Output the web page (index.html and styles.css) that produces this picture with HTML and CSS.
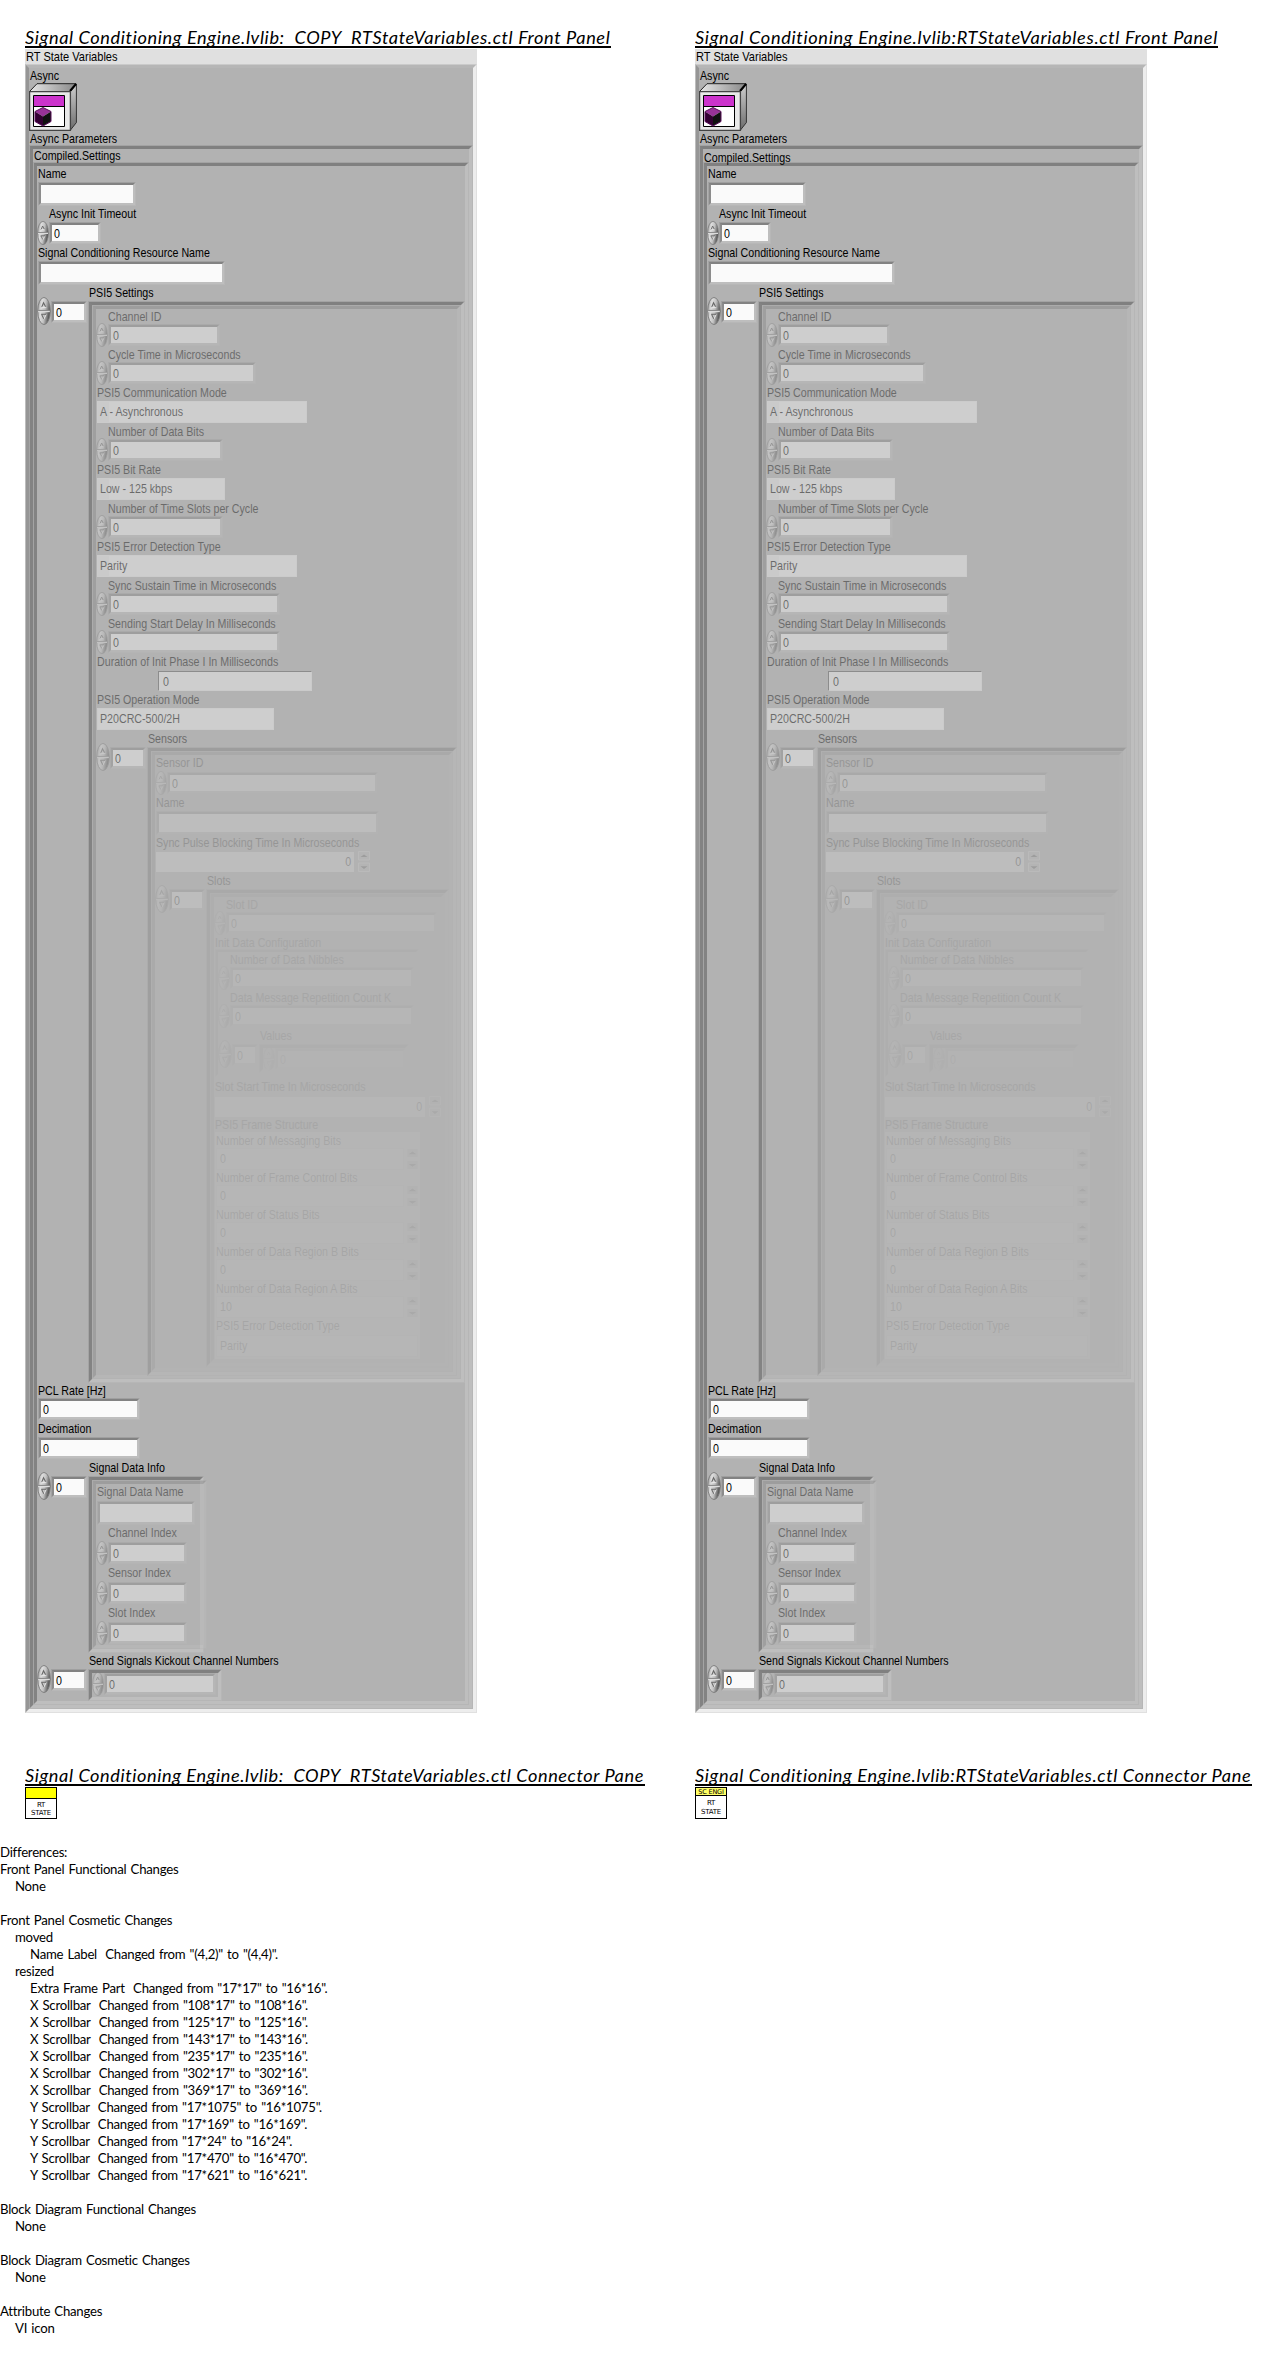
FILE: index.html
```html
<!DOCTYPE html>
<html lang="en">
<head>
<meta charset="utf-8">
<title>VI Comparison Report</title>
<link rel="stylesheet" href="styles.css">
</head>
<body>
<svg class="defs" width="0" height="0">
  <defs>
    <linearGradient id="knob" x1="0" y1="0" x2="1" y2="0.3"><stop offset="0" stop-color="#8a8a8a"/><stop offset=".35" stop-color="#dedede"/><stop offset=".65" stop-color="#c2c2c2"/><stop offset="1" stop-color="#585858"/></linearGradient>
    <linearGradient id="topface" x1="0" y1="0" x2="1" y2="0"><stop offset="0" stop-color="#e8e8e8"/><stop offset="1" stop-color="#888"/></linearGradient>
    <linearGradient id="sideface" x1="0" y1="0" x2="0" y2="1"><stop offset="0" stop-color="#d0d0d0"/><stop offset="1" stop-color="#6c6c6c"/></linearGradient>
  </defs>
  <symbol id="spin" viewBox="0 0 12 24" preserveAspectRatio="none">
    <ellipse cx="6" cy="12" rx="5.4" ry="11.6" fill="url(#knob)" stroke="#7c7c7c" stroke-width=".8"/>
    <path d="M1 11.5H11" stroke="#8c8c8c"/><path d="M1 12.5H11" stroke="#dcdcdc"/>
    <path d="M4 8.8L5.6 5L7.6 8.8" fill="none" stroke="#666" stroke-width=".9"/><path d="M3.8 8.8H8" stroke="#f0f0f0" stroke-width=".8"/>
    <path d="M8 14.8L6 18.8L4 14.8" fill="none" stroke="#eee" stroke-width=".8"/><path d="M3.6 14.8H8M4 15L5.8 18.6" fill="none" stroke="#666" stroke-width=".9"/>
  </symbol>
  <symbol id="updown" viewBox="0 0 12 21" preserveAspectRatio="none">
    <path d="M.5 .5H11.5V9H.5ZM.5 12H11.5V20.5H.5Z" fill="#c4c4c4" stroke="#e4e4e4"/>
    <path d="M2.5 6L6 3.4L9.5 6ZM2.5 15.3H9.5L6 18Z" fill="#333"/>
  </symbol>
</svg>

<template id="front-panel">
  <div class="titlebar"><b>RT State Variables</b></div>
  <div class="window">
    <div class="lab l15"><b>Async</b></div>
    <svg class="cube" width="48" height="48" viewBox="0 0 48 48">
      <path d="M.5 8.5L8 .7H47L41 8.5Z" fill="url(#topface)" stroke="#222"/>
      <path d="M41.5 8.5L47.4 1V39.5L41.5 47Z" fill="url(#sideface)" stroke="#333"/>
      <path d="M41 8L47 1" stroke="#000" stroke-width="2"/>
      <path d="M.6 8.6H41.4V47.4H.6Z" fill="#e9e9e9" stroke="#444" stroke-width="1.3"/>
      <path d="M4.5 12.5H35.5V43.5H4.5Z" fill="#fff" stroke="#000"/>
      <path d="M5 13H35V23H5Z" fill="#cc33cc"/><path d="M4.5 23.5H35.5" stroke="#000"/>
      <path d="M6 28.5L14 24.5L22 28.5L14 33.5Z" fill="#993399"/>
      <path d="M6 28.5L14 33.5V43L6 38.5Z" fill="#330033"/>
      <path d="M22 28.5L14 33.5V43L22 38.5Z" fill="#111"/>
      <path d="M6 28.5L14 24.5L22 28.5V38.5L14 43L6 38.5Z" fill="none" stroke="#5b0e5b"/>
    </svg>
    <div class="lab l14"><b>Async Parameters</b></div>
    <div class="frame grow">
      <div class="lab l13 compiled"><b>Compiled.Settings</b></div>
      <div class="frame grow">
        <div class="blk h40"><div class="lab"><b>Name</b></div><div class="box str w92"></div></div>
        <div class="blk num h39"><div class="lab"><b>Async Init Timeout</b></div><div class="ctl"><svg class="sp"><use href="#spin"/></svg><div class="box w46"><b>0</b></div></div></div>
        <div class="blk h40"><div class="lab"><b>Signal Conditioning Resource Name</b></div><div class="box str w181"></div></div>
        <div class="lab arr"><b>PSI5 Settings</b></div>
        <div class="array a-psi">
          <svg class="idx"><use href="#spin"/></svg><div class="box w30"><b>0</b></div>
          <div class="frame afr"><div class="frame dis">
            <div class="blk num"><div class="lab"><b>Channel ID</b></div><div class="ctl"><svg class="sp"><use href="#spin"/></svg><div class="box w106"><b>0</b></div></div></div>
            <div class="blk num"><div class="lab"><b>Cycle Time in Microseconds</b></div><div class="ctl"><svg class="sp"><use href="#spin"/></svg><div class="box w142"><b>0</b></div></div></div>
            <div class="blk h39"><div class="lab"><b>PSI5 Communication Mode</b></div><div class="ring inc w210"><b>A - Asynchronous</b></div></div>
            <div class="blk num"><div class="lab"><b>Number of Data Bits</b></div><div class="ctl"><svg class="sp"><use href="#spin"/></svg><div class="box w109"><b>0</b></div></div></div>
            <div class="blk h39"><div class="lab"><b>PSI5 Bit Rate</b></div><div class="ring inc w128"><b>Low - 125 kbps</b></div></div>
            <div class="blk num"><div class="lab"><b>Number of Time Slots per Cycle</b></div><div class="ctl"><svg class="sp"><use href="#spin"/></svg><div class="box w109"><b>0</b></div></div></div>
            <div class="blk h39"><div class="lab"><b>PSI5 Error Detection Type</b></div><div class="ring inc w200"><b>Parity</b></div></div>
            <div class="blk num"><div class="lab"><b>Sync Sustain Time in Microseconds</b></div><div class="ctl"><svg class="sp"><use href="#spin"/></svg><div class="box w166"><b>0</b></div></div></div>
            <div class="blk num"><div class="lab"><b>Sending Start Delay In Milliseconds</b></div><div class="ctl"><svg class="sp"><use href="#spin"/></svg><div class="box w166"><b>0</b></div></div></div>
            <div class="blk"><div class="lab"><b>Duration of Init Phase I In Milliseconds</b></div><div class="thin"><b>0</b></div></div>
            <div class="blk h39"><div class="lab"><b>PSI5 Operation Mode</b></div><div class="ring w177"><b>P20CRC-500/2H</b></div></div>
            <div class="lab arr"><b>Sensors</b></div>
            <div class="array a-sens">
              <svg class="idx"><use href="#spin"/></svg><div class="box w30"><b>0</b></div>
              <div class="frame afr"><div class="frame dis">
                <div class="blk h40"><div class="lab"><b>Sensor ID</b></div><div class="ctl"><svg class="sp"><use href="#spin"/></svg><div class="box w205"><b>0</b></div></div></div>
                <div class="blk h40"><div class="lab"><b>Name</b></div><div class="box str w217"></div></div>
                <div class="blk"><div class="lab"><b>Sync Pulse Blocking Time In Microseconds</b></div><div class="sys"><div class="flat w198"><b>0</b></div><svg class="ud"><use href="#updown"/></svg></div></div>
                <div class="lab arr"><b>Slots</b></div>
                <div class="array a-slot">
                  <svg class="idx"><use href="#spin"/></svg><div class="box w30"><b>0</b></div>
                  <div class="frame afr"><div class="frame dis">
                    <div class="blk num"><div class="lab"><b>Slot ID</b></div><div class="ctl"><svg class="sp"><use href="#spin"/></svg><div class="box w205"><b>0</b></div></div></div>
                    <div class="lab l14"><b>Init Data Configuration</b></div>
                    <div class="frame init">
                      <div class="blk num"><div class="lab"><b>Number of Data Nibbles</b></div><div class="ctl"><svg class="sp"><use href="#spin"/></svg><div class="box w178"><b>0</b></div></div></div>
                      <div class="blk num"><div class="lab"><b>Data Message Repetition Count K</b></div><div class="ctl"><svg class="sp"><use href="#spin"/></svg><div class="box w178"><b>0</b></div></div></div>
                      <div class="lab arr vals"><b>Values</b></div>
                      <div class="array a-val">
                        <svg class="idx"><use href="#spin"/></svg><div class="box w20"><b>0</b></div>
                        <div class="frame afr"><div class="ctl dis"><svg class="sp"><use href="#spin"/></svg><div class="box w125"><b>0</b></div></div></div>
                      </div>
                    </div>
                    <div class="blk h40 slotstart"><div class="lab"><b>Slot Start Time In Microseconds</b></div><div class="sys"><div class="flat w210"><b>0</b></div><svg class="ud"><use href="#updown"/></svg></div></div>
                    <div class="lab l15"><b>PSI5 Frame Structure</b></div>
                    <div class="bits">
                      <div class="blk h37"><div class="lab"><b>Number of Messaging Bits</b></div><div class="sys"><div class="flat rim w188"><b>0</b></div><svg class="ud"><use href="#updown"/></svg></div></div>
                      <div class="blk h37"><div class="lab"><b>Number of Frame Control Bits</b></div><div class="sys"><div class="flat rim w188"><b>0</b></div><svg class="ud"><use href="#updown"/></svg></div></div>
                      <div class="blk h37"><div class="lab"><b>Number of Status Bits</b></div><div class="sys"><div class="flat rim w188"><b>0</b></div><svg class="ud"><use href="#updown"/></svg></div></div>
                      <div class="blk h37"><div class="lab"><b>Number of Data Region B Bits</b></div><div class="sys"><div class="flat rim w188"><b>0</b></div><svg class="ud"><use href="#updown"/></svg></div></div>
                      <div class="blk h37"><div class="lab"><b>Number of Data Region A Bits</b></div><div class="sys"><div class="flat rim w188"><b>10</b></div><svg class="ud"><use href="#updown"/></svg></div></div>
                      <div class="blk h39"><div class="lab"><b>PSI5 Error Detection Type</b></div><div class="sys"><div class="flat rim w202"><b>Parity</b></div></div></div>
                    </div>
                  </div></div>
                </div>
              </div></div>
            </div>
          </div></div>
        </div>
        <div class="blk"><div class="lab"><b>PCL Rate [Hz]</b></div><div class="box solo w96"><b>0</b></div></div>
        <div class="blk h39"><div class="lab"><b>Decimation</b></div><div class="box solo w96"><b>0</b></div></div>
        <div class="lab arr"><b>Signal Data Info</b></div>
        <div class="array a-info">
          <svg class="idx"><use href="#spin"/></svg><div class="box w30"><b>0</b></div>
          <div class="frame afr"><div class="frame dis">
            <div class="blk h41"><div class="lab"><b>Signal Data Name</b></div><div class="box str w92"></div></div>
            <div class="blk num h40"><div class="lab"><b>Channel Index</b></div><div class="ctl"><svg class="sp"><use href="#spin"/></svg><div class="box w73"><b>0</b></div></div></div>
            <div class="blk num h40"><div class="lab"><b>Sensor Index</b></div><div class="ctl"><svg class="sp"><use href="#spin"/></svg><div class="box w73"><b>0</b></div></div></div>
            <div class="blk num h40"><div class="lab"><b>Slot Index</b></div><div class="ctl"><svg class="sp"><use href="#spin"/></svg><div class="box w73"><b>0</b></div></div></div>
          </div></div>
        </div>
        <div class="lab arr"><b>Send Signals Kickout Channel Numbers</b></div>
        <div class="array a-send">
          <svg class="idx"><use href="#spin"/></svg><div class="box w30"><b>0</b></div>
          <div class="frame afr"><div class="ctl dis"><svg class="sp"><use href="#spin"/></svg><div class="box w106"><b>0</b></div></div></div>
        </div>
      </div>
    </div>
  </div>
</template>

<main class="compare">
  <section>
    <h2 class="t-a">Signal Conditioning Engine.lvlib:  COPY  RTStateVariables.ctl Front Panel</h2>
    <div class="panel"></div>
  </section>
  <section>
    <h2 class="t-b">Signal Conditioning Engine.lvlib:RTStateVariables.ctl Front Panel</h2>
    <div class="panel second"></div>
  </section>
</main>
<div class="compare connectors">
  <section>
    <h2 class="t-c">Signal Conditioning Engine.lvlib:  COPY  RTStateVariables.ctl Connector Pane</h2>
    <div class="vi old"><div class="banner"></div><span>RT</span><span>STATE</span></div>
  </section>
  <section>
    <h2 class="t-d">Signal Conditioning Engine.lvlib:RTStateVariables.ctl Connector Pane</h2>
    <div class="vi"><div class="banner">SC ENGI</div><span>RT</span><span>STATE</span></div>
  </section>
</div>
<pre class="diff">Differences:
Front Panel Functional Changes
<i></i>None

Front Panel Cosmetic Changes
<i></i>moved
<i></i><i></i>Name Label  Changed from "(4,2)" to "(4,4)".
<i></i>resized
<i></i><i></i>Extra Frame Part  Changed from "17*17" to "16*16".
<i></i><i></i>X Scrollbar  Changed from "108*17" to "108*16".
<i></i><i></i>X Scrollbar  Changed from "125*17" to "125*16".
<i></i><i></i>X Scrollbar  Changed from "143*17" to "143*16".
<i></i><i></i>X Scrollbar  Changed from "235*17" to "235*16".
<i></i><i></i>X Scrollbar  Changed from "302*17" to "302*16".
<i></i><i></i>X Scrollbar  Changed from "369*17" to "369*16".
<i></i><i></i>Y Scrollbar  Changed from "17*1075" to "16*1075".
<i></i><i></i>Y Scrollbar  Changed from "17*169" to "16*169".
<i></i><i></i>Y Scrollbar  Changed from "17*24" to "16*24".
<i></i><i></i>Y Scrollbar  Changed from "17*470" to "16*470".
<i></i><i></i>Y Scrollbar  Changed from "17*621" to "16*621".

Block Diagram Functional Changes
<i></i>None

Block Diagram Cosmetic Changes
<i></i>None

Attribute Changes
<i></i>VI icon</pre>
<script src="script.js"></script>
</body>
</html>
```
FILE: styles.css
```css
* { box-sizing: border-box; }
body { margin: 0; background: #fff; color: #000; height: 2371px; overflow: hidden; font-family: "Liberation Sans", Arial, sans-serif; }
.defs { display: block; position: absolute; }
svg { display: block; flex: none; }

.compare { display: grid; grid-template-columns: 670px 582px; padding: 26px 0 0 25px; }
.connectors { padding-top: 51px; }
h2 { margin: 0 0 1px; height: 22px; overflow: hidden; border-bottom: 2px solid #000; font: italic 400 18.2px/22px Lato, sans-serif; white-space: pre; }
.t-a { width: 586px; letter-spacing: .6px; }
.t-b { width: 523px; letter-spacing: .66px; }
.t-c { width: 620px; letter-spacing: .57px; }
.t-d { width: 557px; letter-spacing: .62px; }
.panel { width: 452px; }

/* front panel text is slightly condensed */
b { display: inline-block; font-weight: 400; font-size: 13px; transform: translateY(-1px) scaleX(.82); transform-origin: 0 50%; white-space: nowrap; }

.titlebar { height: 15px; line-height: 15px; padding-left: 1px; background: #e0e0e0; }
.titlebar b { transform: translateY(-1px) scaleX(.85); }
.window { height: 1649px; display: flex; flex-direction: column; background: #b2b2b2; border: 4px solid; border-color: #b6b6b6 #ededed #ededed #969696; outline: 1px solid rgba(215, 215, 215, .6); outline-offset: -1px; }
/* bevels fade towards their outer edge */
.frame { background: #b2b2b2; border: 4px solid; border-color: #808080 #bebebe #bebebe #838383; outline: 1px solid rgba(178, 178, 178, .7); outline-offset: -1px; }
.grow { flex: 1; display: flex; flex-direction: column; }
.cube { height: 48px; }
.lab { height: 15px; line-height: 15px; padding-left: 1px; flex: none; }
.l13 { height: 13px; line-height: 13px; }
.l14 { height: 14px; line-height: 15px; }
.second .compiled { line-height: 17px; }
.arr { height: 16px; line-height: 16px; padding-left: 52px; }
.vals { padding-left: 42px; }

.blk { height: 38px; display: flex; flex-direction: column; justify-content: space-between; align-items: flex-start; flex: none; }
.num > .lab { padding-left: 12px; }
.h37 { height: 37px; }
.h39 { height: 39px; }
.h40 { height: 40px; }
.h41 { height: 41px; }
.ctl { height: 23px; display: flex; }
.sp { width: 12px; height: 24px; margin-top: -1px; }
.idx { width: 14px; height: 28px; margin-top: -4px; }
.box { box-sizing: content-box; height: 16px; line-height: 17px; border: 3px solid; border-color: #828282 #bebebe #bebebe #8c8c8c; outline: 1px solid rgba(178, 178, 178, .6); outline-offset: -1px; background: #fafafa; flex: none; }
.box b, .ring b { margin-left: 2px; }
.str { height: 18px; margin-left: 1px; }
.solo { margin-left: 1px; margin-bottom: 1px; }
.ring { height: 22px; line-height: 20px; margin: 0 0 1px 1px; background: #fafafa; border: 1px solid #f2f2f2; }
.inc { background: linear-gradient(#fafafa, #fafafa) 11px 0 no-repeat, #eee; }
.thin { width: 154px; height: 20px; line-height: 19px; margin: 0 0 1px 62px; padding-left: 4px; background: #fafafa; border: 1px solid; border-color: #555 #f0f0f0 #f0f0f0 #555; }
.sys { display: flex; align-items: flex-end; margin: 0 0 1px 1px; }
.flat { height: 20px; line-height: 20px; text-align: right; background: #fafafa; padding-right: 3px; }
.flat b { transform-origin: 100% 50%; }
.ud { width: 12px; height: 21px; margin-left: 4px; }
.rim { height: 22px; text-align: left; line-height: 20px; padding-left: 3px; border: 1px solid #d8d8d8; }
.rim b { transform-origin: 0 50%; }

/* control widths */
.w20 { width: 20px; }
.w30 { width: 30px; }
.w46 { width: 46px; }
.w73 { width: 73px; }
.w92 { width: 92px; }
.w96 { width: 96px; }
.w106 { width: 106px; }
.w109 { width: 109px; }
.w125 { width: 125px; }
.w128 { width: 128px; }
.w142 { width: 142px; }
.w166 { width: 166px; }
.w177 { width: 177px; }
.w178 { width: 178px; }
.w181 { width: 181px; }
.w188 { width: 188px; }
.w198 { width: 198px; }
.w200 { width: 200px; }
.w202 { width: 202px; }
.w205 { width: 205px; }
.w210 { width: 210px; }
.w217 { width: 217px; }

/* an unused array element is dimmed, and dims again at each nesting level */
.array { display: flex; align-items: flex-start; flex: none; }
.afr { margin-left: 1px; align-self: stretch; display: flex; flex: none; }
.dis { opacity: .4; flex: 1; }
.a-psi { height: 1082px; }
.a-psi > .afr { width: 377px; }
.a-sens { height: 629px; }
.a-sens > .afr { width: 310px; }
.a-slot { height: 478px; }
.a-slot > .afr { width: 243px; }
.init { width: 204px; height: 128px; border-width: 3px; margin-left: 1px; }
.a-val { height: 29px; }
.a-val > .afr { width: 150px; }
.slotstart > .lab { height: 19px; line-height: 20px; }
.bits { width: 205px; height: 227px; margin-left: 1px; padding-top: 1px; background: #f0f0f0; }
.bits .sys { margin: 0 0 0 1px; }
.bits .ud { width: 13px; height: 22px; margin-left: 2px; }
.a-info { height: 177px; }
.a-info > .afr { width: 116px; }
.a-send { height: 32px; }
.a-send > .afr { width: 134px; }

.vi { width: 32px; height: 32px; border: 1px solid #000; display: flex; flex-direction: column; align-items: center; font: 7px/9px "DejaVu Sans", sans-serif; letter-spacing: -.2px; }
.banner { align-self: stretch; height: 8px; line-height: 8px; font-size: 6.5px; text-align: center; white-space: nowrap; background: #ffff66; border-bottom: 1px solid #000; margin-bottom: 3px; }
.old { line-height: 8px; }
.old .banner { height: 11px; background: #ff0; margin-bottom: 2px; }

.diff { margin: 25px 0 0; font: 13.2px/17px Lato, sans-serif; letter-spacing: -.24px; word-spacing: 1px; }
.diff i { display: inline-block; width: 15px; }
```
FILE: script.js
```js
// Both columns show the same front panel.
const source = document.getElementById('front-panel');
document.querySelectorAll('.panel').forEach((panel) => {
  panel.append(source.content.cloneNode(true));
});
```
